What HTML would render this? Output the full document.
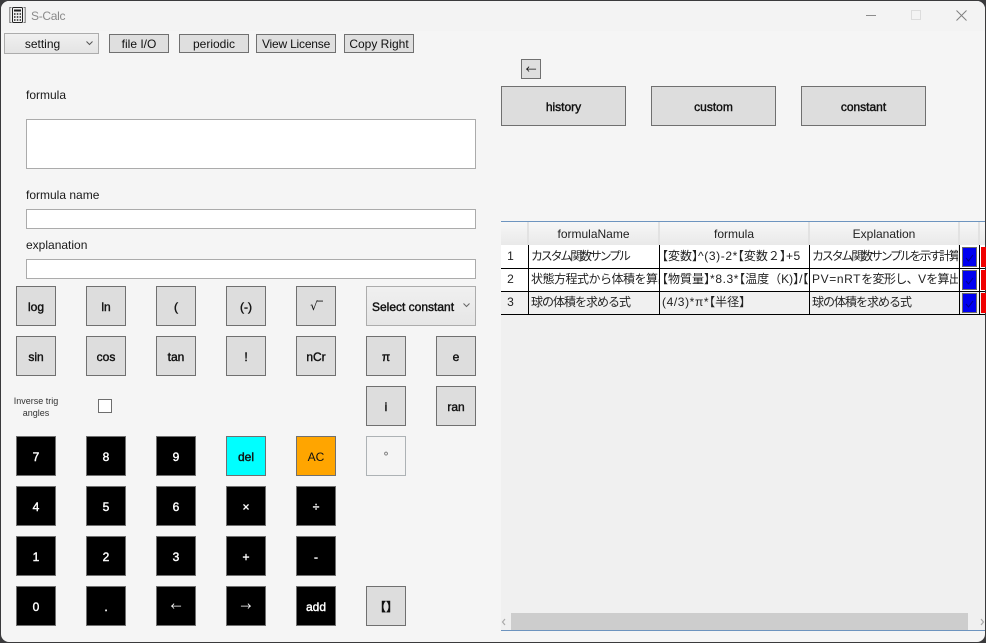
<!DOCTYPE html>
<html><head><meta charset="utf-8">
<style>
html,body{margin:0;padding:0;width:986px;height:643px;overflow:hidden;background:#3a3a3c}
*{box-sizing:border-box}
body{font-family:"Liberation Sans","Noto Sans CJK JP",sans-serif;font-size:12px;color:#111}
#win{position:absolute;left:1px;top:1px;width:984px;height:641px;background:#f5f5f5;border-radius:8px;overflow:hidden}
#tb{position:absolute;left:0;top:0;width:984px;height:30px;background:#f3f3f3}
.a{position:absolute}
.c{position:absolute;display:flex;align-items:center;justify-content:center;white-space:nowrap}
.t{background:#dfdfdf;border:1px solid #707070;color:#111}
.b{background:#dddddd;border:1px solid #707070;font-size:12px;color:#111;-webkit-text-stroke:.42px currentColor;padding-top:2px}
.k{background:#000;border:1px solid #707070;color:#fff;font-size:12px;-webkit-text-stroke:.42px currentColor;padding-top:2px}
.ar{font-family:"Noto Sans CJK JP",sans-serif;padding-top:0;font-size:11px;-webkit-text-stroke:0}
.g{position:absolute;white-space:nowrap;overflow:hidden;line-height:22px;font-size:12px;color:#222;background:#fff}
.i{position:absolute;background:#fff;border:1px solid #ababab}
.l{position:absolute;white-space:nowrap;color:#1a1a1a}
.f{font-size:12px}
.s{background:#f0f0f0}
.m{letter-spacing:.6px;font-size:12px}
.o{margin-left:-6px}
.e{margin-right:-6px}
.kn{letter-spacing:-2.2px}
.j{letter-spacing:-1px}
.h{position:absolute;top:222px;height:23px;line-height:25px;text-align:center;color:#222;background:linear-gradient(#f7f7f7,#e9e9e9);border-right:2px solid #e2e2e2;font-size:12px}
.ln{position:absolute;background:#000}
.cb{position:absolute;width:15px;height:20px;background:#0000f0;border:1px solid #6a6a6a}
.rd{position:absolute;width:5px;height:20px;background:#f00000}
.r2{line-height:20px}
</style></head>
<body>
<div id="win"><div id="tb"></div></div>

<!-- Title bar -->
<svg class="a" style="left:9px;top:6px" width="17" height="18" viewBox="0 0 17 18" fill="none" stroke="#222" stroke-width="1">
<path d="M2.5 1.5H.8V16.5H2.5M14.5 1.5H16.2V16.5H14.5" stroke="#777"/>
<rect x="3.5" y="1.5" width="10" height="15" rx="1"/>
<path d="M5 4.5H12" stroke-width="2"/>
<path d="M5 8H6.5M7.8 8H9.3M10.6 8H12M5 11H6.5M7.8 11H9.3M10.6 11H12M5 14H6.5M7.8 14H9.3M10.6 14H12" stroke-width="1.6"/>
</svg>
<div class="l" style="left:31px;top:9px;color:#8a8a8a;font-size:12px;letter-spacing:-.3px">S-Calc</div>
<div class="a" style="left:866px;top:15px;width:10px;height:1px;background:#8c8c8c"></div>
<div class="a" style="left:911px;top:10px;width:10px;height:10px;border:1px solid #dcdcdc"></div>
<svg class="a" style="left:956px;top:10px" width="11" height="11" viewBox="0 0 11 11"><path d="M.5.5L10.5 10.5M10.5.5L.5 10.5" stroke="#808080" stroke-width="1"/></svg>

<!-- Toolbar -->
<div class="c" style="left:4px;top:33px;width:95px;height:21px;background:linear-gradient(#f0f0f0,#e4e4e4);border:1px solid #acacac;padding-right:18px">setting</div>
<svg class="a" style="left:86px;top:41px" width="7" height="5" viewBox="0 0 7 5"><path d="M.5.5L3.5 3.5L6.5.5" stroke="#555" fill="none"/></svg>
<div class="c t" style="left:109px;top:34px;width:60px;height:19px">file I/O</div>
<div class="c t" style="left:179px;top:34px;width:70px;height:19px">periodic</div>
<div class="c t" style="left:256px;top:34px;width:80px;height:19px;letter-spacing:-.2px">View License</div>
<div class="c t" style="left:344px;top:34px;width:70px;height:19px">Copy Right</div>

<!-- Left form -->
<div class="l" style="left:26px;top:88px">formula</div>
<div class="i" style="left:26px;top:119px;width:450px;height:50px"></div>
<div class="l" style="left:26px;top:188px">formula name</div>
<div class="i" style="left:26px;top:209px;width:450px;height:20px"></div>
<div class="l" style="left:26px;top:238px">explanation</div>
<div class="i" style="left:26px;top:259px;width:450px;height:20px"></div>

<!-- Function buttons -->
<div class="c b" style="left:16px;top:286px;width:40px;height:40px">log</div>
<div class="c b" style="left:86px;top:286px;width:40px;height:40px">ln</div>
<div class="c b" style="left:156px;top:286px;width:40px;height:40px">(</div>
<div class="c b" style="left:226px;top:286px;width:40px;height:40px">(-)</div>
<div class="c b" style="left:296px;top:286px;width:40px;height:40px;-webkit-text-stroke:0;font-family:'DejaVu Sans',sans-serif;font-size:12px;letter-spacing:-1px;padding-top:0">√‾</div>
<div class="c" style="left:366px;top:286px;width:110px;height:40px;background:linear-gradient(#f0f0f0,#e6e6e6);border:1px solid #acacac;-webkit-text-stroke:.42px currentColor;justify-content:flex-start;padding:2px 0 0 5px">Select constant</div>
<svg class="a" style="left:463px;top:303px" width="7" height="5" viewBox="0 0 7 5"><path d="M.5.5L3.5 3.5L6.5.5" stroke="#666" fill="none"/></svg>

<div class="c b" style="left:16px;top:336px;width:40px;height:40px">sin</div>
<div class="c b" style="left:86px;top:336px;width:40px;height:40px">cos</div>
<div class="c b" style="left:156px;top:336px;width:40px;height:40px">tan</div>
<div class="c b" style="left:226px;top:336px;width:40px;height:40px">!</div>
<div class="c b" style="left:296px;top:336px;width:40px;height:40px">nCr</div>
<div class="c b" style="left:366px;top:336px;width:40px;height:40px">π</div>
<div class="c b" style="left:436px;top:336px;width:40px;height:40px">e</div>

<div class="a" style="left:6px;top:395px;width:60px;text-align:center;font-size:9px;line-height:12px;color:#333">Inverse trig<br>angles</div>
<div class="a" style="left:98px;top:399px;width:14px;height:14px;background:#fff;border:1px solid #6e6e6e"></div>
<div class="c b" style="left:366px;top:386px;width:40px;height:40px">i</div>
<div class="c b" style="left:436px;top:386px;width:40px;height:40px">ran</div>

<div class="c k" style="left:16px;top:436px;width:40px;height:40px">7</div>
<div class="c k" style="left:86px;top:436px;width:40px;height:40px">8</div>
<div class="c k" style="left:156px;top:436px;width:40px;height:40px">9</div>
<div class="c b" style="left:226px;top:436px;width:40px;height:40px;background:#00ffff">del</div>
<div class="c b" style="left:296px;top:436px;width:40px;height:40px;background:#ffa500;-webkit-text-stroke:0">AC</div>
<div class="c" style="left:366px;top:436px;width:40px;height:40px;background:#f4f4f4;border:1px solid #adb2b5;color:#777;font-weight:bold">°</div>

<div class="c k" style="left:16px;top:486px;width:40px;height:40px">4</div>
<div class="c k" style="left:86px;top:486px;width:40px;height:40px">5</div>
<div class="c k" style="left:156px;top:486px;width:40px;height:40px">6</div>
<div class="c k" style="left:226px;top:486px;width:40px;height:40px">×</div>
<div class="c k" style="left:296px;top:486px;width:40px;height:40px">÷</div>

<div class="c k" style="left:16px;top:536px;width:40px;height:40px">1</div>
<div class="c k" style="left:86px;top:536px;width:40px;height:40px">2</div>
<div class="c k" style="left:156px;top:536px;width:40px;height:40px">3</div>
<div class="c k" style="left:226px;top:536px;width:40px;height:40px">+</div>
<div class="c k" style="left:296px;top:536px;width:40px;height:40px">-</div>

<div class="c k" style="left:16px;top:586px;width:40px;height:40px">0</div>
<div class="c k" style="left:86px;top:586px;width:40px;height:40px">.</div>
<div class="c k ar" style="left:156px;top:586px;width:40px;height:40px">←</div>
<div class="c k ar" style="left:226px;top:586px;width:40px;height:40px">→</div>
<div class="c k" style="left:296px;top:586px;width:40px;height:40px">add</div>
<div class="c b" style="left:366px;top:586px;width:40px;height:40px;font-family:'Noto Sans CJK JP',sans-serif;padding-top:0">【】</div>

<!-- Right panel buttons -->
<div class="c t ar" style="left:521px;top:59px;width:20px;height:20px">←</div>
<div class="c b" style="left:501px;top:86px;width:125px;height:40px">history</div>
<div class="c b" style="left:651px;top:86px;width:125px;height:40px">custom</div>
<div class="c b" style="left:801px;top:86px;width:125px;height:40px">constant</div>

<!-- Grid -->
<div class="a" style="left:501px;top:221px;width:484px;height:410px;background:#f0f0f0;border-top:1px solid #6d94bf;border-bottom:1px solid #6d94bf"></div>
<div class="h" style="left:501px;width:28px"></div>
<div class="h" style="left:529px;width:131px">formulaName</div>
<div class="h" style="left:660px;width:150px">formula</div>
<div class="h" style="left:810px;width:150px">Explanation</div>
<div class="h" style="left:960px;width:20px"></div>
<div class="h" style="left:980px;width:5px;border-right:0"></div>

<div class="g" style="left:501px;top:245px;width:28px;height:23px;text-align:center;padding-right:9px">1</div>
<div class="g" style="left:529px;top:245px;width:130px;height:23px;padding-left:2px"><span class="kn">カスタム関数サンプル</span></div>
<div class="g" style="left:660px;top:245px;width:149px;height:23px;padding-left:2px"><span class="o">【</span>変数<span class="e">】</span><span class="m">^(3)-2*</span><span class="o">【</span>変数２<span class="e">】</span><span class="m">+5</span></div>
<div class="g" style="left:810px;top:245px;width:148px;height:23px;padding-left:2px"><span class="kn">カスタム関数サンプルを示す計算</span></div>

<div class="g r2" style="left:501px;top:269px;width:28px;height:22px;text-align:center;padding-right:9px">2</div>
<div class="g r2" style="left:529px;top:269px;width:130px;height:22px;padding-left:2px"><span style="letter-spacing:-.5px">状態方程式から体積を算出</span></div>
<div class="g r2" style="left:660px;top:269px;width:149px;height:22px;padding-left:2px"><span class="o">【</span>物質量<span class="e">】</span><span class="m">*8.3*</span><span class="o">【</span>温度（K)<span class="e">】</span>/<span class="o">【</span>圧力<span class="e">】</span></div>
<div class="g r2" style="left:810px;top:269px;width:148px;height:22px;padding-left:2px"><span class="m">PV=nRT</span><span style="letter-spacing:-.6px">を変形し、</span>V<span style="letter-spacing:-.6px">を算出す</span></div>

<div class="g r2 s" style="left:501px;top:292px;width:28px;height:22px;text-align:center;padding-right:9px">3</div>
<div class="g r2 s" style="left:529px;top:292px;width:130px;height:22px;padding-left:2px"><span class="j">球の体積を求める式</span></div>
<div class="g r2 s" style="left:660px;top:292px;width:149px;height:22px;padding-left:2px"><span class="m">(4/3)*π*</span><span class="o">【</span>半径<span class="e">】</span></div>
<div class="g r2 s" style="left:810px;top:292px;width:148px;height:22px;padding-left:2px"><span class="j">球の体積を求める式</span></div>

<div class="a" style="left:960px;top:245px;width:25px;height:23px;background:#fff"></div>
<div class="a" style="left:960px;top:269px;width:25px;height:22px;background:#fff"></div>

<div class="cb" style="left:962px;top:247px"></div>
<div class="cb" style="left:962px;top:270px"></div>
<div class="cb" style="left:962px;top:293px"></div>
<svg class="a" style="left:965px;top:254px" width="9" height="8" viewBox="0 0 9 8"><path d="M1 4L3.5 7L8 1" stroke="#00008a" fill="none"/></svg>
<svg class="a" style="left:965px;top:277px" width="9" height="8" viewBox="0 0 9 8"><path d="M1 4L3.5 7L8 1" stroke="#00008a" fill="none"/></svg>
<svg class="a" style="left:965px;top:300px" width="9" height="8" viewBox="0 0 9 8"><path d="M1 4L3.5 7L8 1" stroke="#00008a" fill="none"/></svg>
<div class="rd" style="left:981px;top:247px"></div>
<div class="rd" style="left:981px;top:270px"></div>
<div class="rd" style="left:981px;top:293px"></div>

<div class="ln" style="left:501px;top:268px;width:484px;height:1px"></div>
<div class="ln" style="left:501px;top:291px;width:484px;height:1px"></div>
<div class="ln" style="left:501px;top:314px;width:484px;height:1px"></div>
<div class="ln" style="left:528px;top:245px;width:1px;height:70px"></div>
<div class="ln" style="left:659px;top:245px;width:1px;height:70px"></div>
<div class="ln" style="left:809px;top:245px;width:1px;height:70px"></div>
<div class="ln" style="left:959px;top:245px;width:1px;height:70px"></div>
<div class="ln" style="left:979px;top:245px;width:1px;height:70px"></div>

<!-- Scrollbar -->
<div class="a" style="left:511px;top:613px;width:457px;height:17px;background:#cdcdcd"></div>
<svg class="a" style="left:501px;top:618px" width="5" height="8" viewBox="0 0 5 8"><path d="M4 1L1.5 4L4 7" stroke="#aaa" stroke-width="1.2" fill="none"/></svg>
<svg class="a" style="left:980px;top:618px" width="5" height="8" viewBox="0 0 5 8"><path d="M1 1L3.5 4L1 7" stroke="#aaa" stroke-width="1.2" fill="none"/></svg>
</body></html>
